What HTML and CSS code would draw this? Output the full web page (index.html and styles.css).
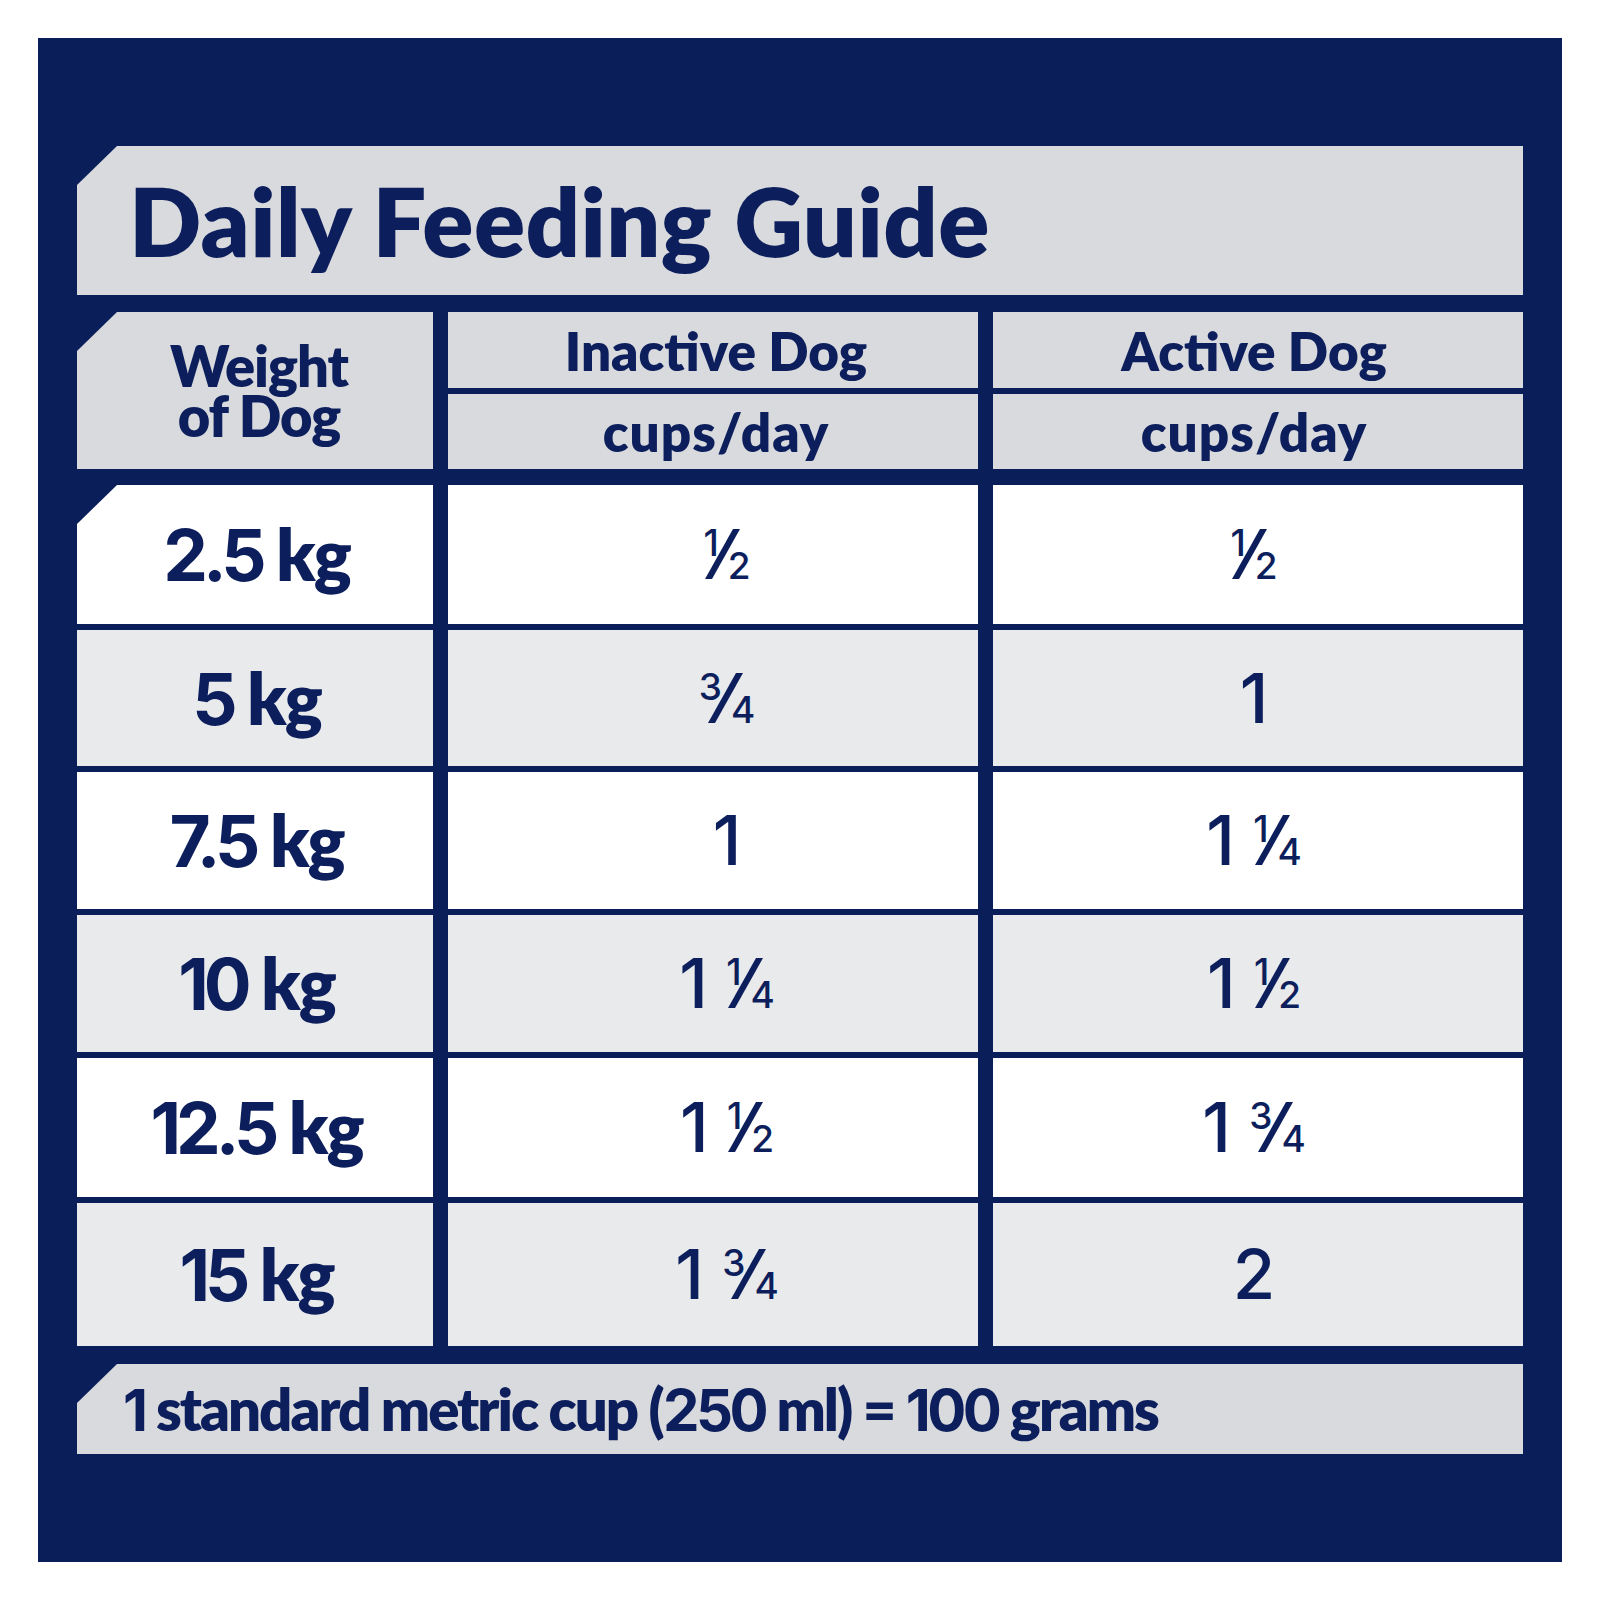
FILE: index.html
```html
<!DOCTYPE html>
<html lang="en">
<head>
<meta charset="utf-8">
<title>Daily Feeding Guide</title>
<link rel="stylesheet" href="styles.css">
</head>
<body>
<div class="board">
  <div class="title chamfer"><h1>Daily Feeding Guide</h1></div>

  <div class="head">
    <div class="hweight chamfer"><span>Weight</span><span>of Dog</span></div>
    <div class="hcol inactive">
      <div class="hsub">Inactive Dog</div>
      <div class="hsub unit">cups/day</div>
    </div>
    <div class="hcol active">
      <div class="hsub">Active Dog</div>
      <div class="hsub unit">cups/day</div>
    </div>
  </div>

  <div class="rows">
    <div class="cell w white chamfer"><span><span class="num">2.5</span> kg</span></div>
    <div class="cell v white in"><span class="val"><span class="frac"><span class="n">1</span><svg class="sl" viewBox="0 0 35 50" width="35" height="50"><polygon points="28,0 35,0 7,50 0,50"/></svg><span class="d">2</span></span></span></div>
    <div class="cell v white ac"><span class="val"><span class="frac"><span class="n">1</span><svg class="sl" viewBox="0 0 35 50" width="35" height="50"><polygon points="28,0 35,0 7,50 0,50"/></svg><span class="d">2</span></span></span></div>

    <div class="cell w grey"><span><span class="num">5</span> kg</span></div>
    <div class="cell v grey in"><span class="val"><span class="frac"><span class="n">3</span><svg class="sl" viewBox="0 0 35 50" width="35" height="50"><polygon points="28,0 35,0 7,50 0,50"/></svg><span class="d">4</span></span></span></div>
    <div class="cell v grey ac"><span class="val">1</span></div>

    <div class="cell w white"><span><span class="num">7.5</span> kg</span></div>
    <div class="cell v white in"><span class="val">1</span></div>
    <div class="cell v white ac"><span class="val">1 <span class="frac"><span class="n">1</span><svg class="sl" viewBox="0 0 35 50" width="35" height="50"><polygon points="28,0 35,0 7,50 0,50"/></svg><span class="d">4</span></span></span></div>

    <div class="cell w grey"><span><span class="num">10</span> kg</span></div>
    <div class="cell v grey in"><span class="val">1 <span class="frac"><span class="n">1</span><svg class="sl" viewBox="0 0 35 50" width="35" height="50"><polygon points="28,0 35,0 7,50 0,50"/></svg><span class="d">4</span></span></span></div>
    <div class="cell v grey ac"><span class="val">1 <span class="frac"><span class="n">1</span><svg class="sl" viewBox="0 0 35 50" width="35" height="50"><polygon points="28,0 35,0 7,50 0,50"/></svg><span class="d">2</span></span></span></div>

    <div class="cell w white"><span><span class="num">12.5</span> kg</span></div>
    <div class="cell v white in"><span class="val">1 <span class="frac"><span class="n">1</span><svg class="sl" viewBox="0 0 35 50" width="35" height="50"><polygon points="28,0 35,0 7,50 0,50"/></svg><span class="d">2</span></span></span></div>
    <div class="cell v white ac"><span class="val">1 <span class="frac"><span class="n">3</span><svg class="sl" viewBox="0 0 35 50" width="35" height="50"><polygon points="28,0 35,0 7,50 0,50"/></svg><span class="d">4</span></span></span></div>

    <div class="cell w grey"><span><span class="num">15</span> kg</span></div>
    <div class="cell v grey in"><span class="val">1 <span class="frac"><span class="n">3</span><svg class="sl" viewBox="0 0 35 50" width="35" height="50"><polygon points="28,0 35,0 7,50 0,50"/></svg><span class="d">4</span></span></span></div>
    <div class="cell v grey ac"><span class="val">2</span></div>
  </div>

  <div class="note chamfer"><span><span class="num">1</span> standard metric cup (<span class="num">250</span> ml) = <span class="num">100</span> grams</span></div>
</div>
</body>
</html>
```

FILE: styles.css
```css
* { box-sizing: border-box; }

body {
  margin: 0;
  background: #ffffff;
  font-family: Lato, "Open Sans", "Liberation Sans", sans-serif;
  color: #0c1f5c;
}

.board {
  margin: 38px;
  width: 1524px;
  height: 1524px;
  padding: 108px 39px;
  background: #0a1f5a;
  display: flex;
  flex-direction: column;
}

.chamfer {
  clip-path: polygon(40px 0, 100% 0, 100% 100%, 0 100%, 0 39px);
}

.num {
  font-family: Inter, "Noto Sans", "Liberation Sans", sans-serif;
}

.title {
  height: 149px;
  flex: none;
  background: #d9dadd;
  display: flex;
  align-items: center;
  padding-left: 52px;
}

.title h1 {
  margin: 0;
  font-size: 95px;
  font-weight: 800;
  line-height: 1;
  letter-spacing: 0.4px;
}

.head {
  margin-top: 17px;
  height: 157px;
  flex: none;
  display: grid;
  grid-template-columns: 356px 530px 530px;
  column-gap: 15px;
}

.hweight {
  background: #d9dadd;
  display: flex;
  flex-direction: column;
  align-items: center;
  justify-content: center;
  padding-left: 8px;
  font-size: 56px;
  font-weight: 800;
  line-height: 50px;
  letter-spacing: -1px;
}

.hcol {
  display: grid;
  grid-template-rows: 76px 75px;
  row-gap: 6px;
}

.hsub {
  background: #d9dadd;
  display: flex;
  align-items: center;
  justify-content: center;
  font-size: 53px;
  font-weight: 800;
  line-height: 1;
  letter-spacing: 0;
}

.hsub.unit { letter-spacing: 1px; }

.inactive .hsub { padding-left: 6px; }
.active .hsub { padding-right: 8px; }

.rows {
  margin-top: 16px;
  flex: none;
  display: grid;
  grid-template-columns: 356px 530px 530px;
  grid-template-rows: 139px 136px 137px 137px 139px 143px;
  gap: 6px 15px;
}

.cell {
  display: flex;
  align-items: center;
  justify-content: center;
  line-height: 1;
  white-space: nowrap;
}

.white { background: #ffffff; }
.grey { background: #e9eaec; }

.w {
  font-size: 71px;
  font-weight: 800;
  letter-spacing: -2px;
  padding-left: 3px;
}

.w .num { font-weight: 700; letter-spacing: -5px; }

.v {
  font-family: Inter, "Noto Sans", "Liberation Sans", sans-serif;
  font-size: 69px;
  font-weight: 500;
}

.val { white-space: nowrap; }

.in { padding-left: 28px; }
.ac { padding-right: 8px; }

.frac {
  display: inline-block;
  white-space: nowrap;
}

.frac .n,
.frac .d {
  font-size: 37px;
  font-weight: 500;
}

.frac .n { vertical-align: 23px; }

.frac .sl {
  display: inline-block;
  vertical-align: baseline;
  fill: #0c1f5c;
  margin-left: -14px;
  margin-right: -12px;
}

.note {
  margin-top: 18px;
  height: 90px;
  flex: none;
  background: #d9dadd;
  display: flex;
  align-items: center;
  padding-left: 46px;
  font-size: 58px;
  font-weight: 800;
  line-height: 1;
  letter-spacing: -2px;
  white-space: nowrap;
}

.note .num { font-weight: 700; letter-spacing: -3.5px; }
```
